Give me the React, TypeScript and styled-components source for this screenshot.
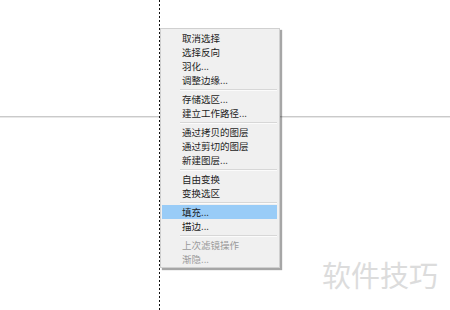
import React from 'react'
import styled, {createGlobalStyle} from 'styled-components'

const GlobalStyle = createGlobalStyle`
  html, body {
    margin: 0;
    padding: 0;
    background: #fff;
  }
  body {
    font-family: "Noto Sans CJK SC", "Noto Sans", sans-serif;
  }
`

const Canvas = styled.div`
  position: relative;
  width: 450px;
  height: 310px;
  overflow: hidden;
  background: #fff;
`

const HGuide = styled.div`
  position: absolute;
  left: 0;
  right: 0;
  top: 116px;
  height: 1px;
  background: #cacaca;
  border-bottom: 1px solid #e8e8e8;
`

const VGuide = styled.div`
  position: absolute;
  top: 0;
  bottom: 0;
  left: 159px;
  width: 1px;
  background: repeating-linear-gradient(to bottom, #111 0 2px, transparent 2px 4px);
`

const Menu = styled.ul`
  position: absolute;
  left: 160px;
  top: 28px;
  width: 115px;
  margin: 0;
  padding: 2px 2px 1px 1px;
  list-style: none;
  background: #f0f0f0;
  border: 1px solid #d0d0d0;
  box-shadow: 2px 2px 1px rgba(0, 0, 0, 0.35);
`

const Item = styled.li<{$active?: boolean; $disabled?: boolean}>`
  height: 14px;
  line-height: 14px;
  padding-left: 20px;
  font-size: 9.5px;
  white-space: nowrap;
  color: ${(p) => (p.$disabled ? '#9a9a9a' : '#1c1c1c')};
  background: ${(p) => (p.$active ? '#99ccf7' : 'transparent')};
`

const Separator = styled.li`
  height: 5px;
  margin-left: 18px;
  display: flex;
  flex-direction: column;
  justify-content: center;

  &::before {
    content: '';
    height: 1px;
    background: #d7d7d7;
  }
  &::after {
    content: '';
    height: 1px;
    background: #fbfbfb;
  }
`

const Watermark = styled.div`
  position: absolute;
  right: 12px;
  top: 256px;
  font-size: 29px;
  line-height: 36px;
  color: #dcdcdc;
`

type Entry = {label: string; active?: boolean; disabled?: boolean} | 'sep'

const entries: Entry[] = [
  {label: '取消选择'},
  {label: '选择反向'},
  {label: '羽化...'},
  {label: '调整边缘...'},
  'sep',
  {label: '存储选区...'},
  {label: '建立工作路径...'},
  'sep',
  {label: '通过拷贝的图层'},
  {label: '通过剪切的图层'},
  {label: '新建图层...'},
  'sep',
  {label: '自由变换'},
  {label: '变换选区'},
  'sep',
  {label: '填充...', active: true},
  {label: '描边...'},
  'sep',
  {label: '上次滤镜操作', disabled: true},
  {label: '渐隐...', disabled: true},
]

const App: React.FC = () => {
  return (
    <>
      <GlobalStyle />
      <Canvas>
        <HGuide />
        <VGuide />
        <Menu>
          {entries.map((e, i) =>
            e === 'sep' ? (
              <Separator key={i} />
            ) : (
              <Item key={i} $active={e.active} $disabled={e.disabled}>
                {e.label}
              </Item>
            )
          )}
        </Menu>
        <Watermark>软件技巧</Watermark>
      </Canvas>
    </>
  )
}

export default App
